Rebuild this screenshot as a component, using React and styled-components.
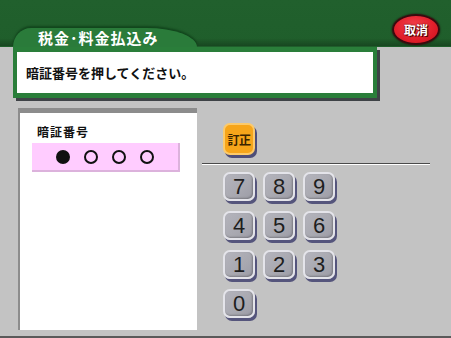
import React from "react";
import styled, { createGlobalStyle } from "styled-components";

const Global = createGlobalStyle`
  html, body { margin: 0; padding: 0; background: #c2c2c2; }
  body { font-family: "Noto Sans CJK JP", "Noto Sans", sans-serif; }
`;

const Screen = styled.div`
  width: 451px;
  height: 338px;
  box-sizing: border-box;
  background: #c3c3c3;
  border-bottom: 2px solid #5a5a5a;
  display: flex;
  flex-direction: column;
  overflow: hidden;
`;

const Header = styled.header`
  height: 101px;
  display: flex;
  align-items: flex-start;
  padding-left: 13px;
  background:
    linear-gradient(to bottom, rgba(0,0,0,0) 0, rgba(0,0,0,0) 38px, rgba(0,0,0,0.25) 46px, transparent 46px),
    linear-gradient(to bottom, #21602d 0, #1f5e2b 47px, #c3c3c3 47px);
`;

const LeftCol = styled.div`
  padding-top: 28px;
  display: flex;
  flex-direction: column;
`;

const Tab = styled.div`
  width: 184px;
  height: 19px;
  background: #2a7b3a;
  border-radius: 18px 50px 0 0 / 19px 19px 0 0;
  box-shadow: 0 -2px 2px rgba(0, 40, 10, 0.45);
  color: #fff;
  font-size: 15px;
  font-weight: 700;
  line-height: 20px;
  padding-left: 25px;
  box-sizing: border-box;
  letter-spacing: 1px;
`;

const MessageBox = styled.div`
  width: 364px;
  height: 51px;
  box-sizing: border-box;
  background: #fff;
  border: 4px solid #2a7e3a;
  border-top-width: 5px;
  border-bottom-width: 5px;
  box-shadow: 3px 3px 0 #3e4246;
  display: flex;
  align-items: center;
  padding-left: 9px;
  font-size: 13px;
  font-weight: 700;
  color: #111;
`;

const CancelButton = styled.div`
  margin-left: 15px;
  margin-top: 14px;
  width: 48px;
  height: 31px;
  box-sizing: border-box;
  border-radius: 50%;
  background: radial-gradient(ellipse at 45% 35%, #f3404a 0%, #e2202c 55%, #c8101c 100%);
  border: 2px solid #3a0a0e;
  box-shadow: 0 0 2px #1a0a0a;
  display: flex;
  align-items: center;
  justify-content: center;
  color: #fff;
  font-size: 12px;
  font-weight: 700;
  text-shadow: 0 0 2px #400, 1px 1px 0 #500;
`;

const Main = styled.main`
  display: flex;
  margin-top: 7px;
`;

const InputPanel = styled.section`
  margin-left: 18px;
  width: 179px;
  height: 222px;
  box-sizing: border-box;
  background: #fff;
  border-top: 5px solid #8c8c8c;
  border-left: 2px solid #8c8c8c;
  padding: 11px 0 0 12px;
`;

const Label = styled.div`
  font-size: 12px;
  font-weight: 700;
  line-height: 16px;
  color: #111;
  padding-left: 5px;
  letter-spacing: 1px;
`;

const PinBox = styled.div`
  margin-top: 3px;
  width: 148px;
  height: 29px;
  box-sizing: border-box;
  background: #ffccff;
  border-right: 2px solid #dcb2dc;
  border-bottom: 2px solid #dcb2dc;
  display: flex;
  align-items: center;
  padding-left: 24px;
  gap: 14px;
`;

const Dot = styled.span`
  width: 14px;
  height: 14px;
  box-sizing: border-box;
  border-radius: 50%;
  border: 2.5px solid #111;
  background: ${(p) => (p.$filled ? "#111" : "transparent")};
`;

const KeyArea = styled.section`
  margin-left: 5px;
  width: 228px;
  display: flex;
  flex-direction: column;
`;

const CorrectButton = styled.div`
  margin: 15px 0 0 21px;
  width: 32px;
  height: 32px;
  box-sizing: border-box;
  border-radius: 7px;
  background: #f6a51a;
  border: 2px solid #fcca6a;
  box-shadow: 2px 3px 0 #4e4e78;
  display: flex;
  align-items: center;
  justify-content: center;
  font-size: 12px;
  font-weight: 700;
  color: #3a2400;
  letter-spacing: -0.5px;
`;

const Divider = styled.hr`
  margin: 8px 0 0;
  width: 228px;
  height: 0;
  border: 0;
  border-top: 1px solid #4a4a4a;
  border-bottom: 1px solid #ffffff;
`;

const KeyGrid = styled.div`
  margin: 7px 0 0 21px;
  display: grid;
  grid-template-columns: repeat(3, 34px);
  grid-auto-rows: 31px;
  column-gap: 6px;
  row-gap: 8px;
`;

const Key = styled.div`
  width: 32px;
  height: 29px;
  box-sizing: border-box;
  border-radius: 7px;
  background: linear-gradient(135deg, #b4b4bc 0%, #a8a8b0 60%, #9c9ca6 100%);
  border: 2px solid #e4e4ea;
  box-shadow: 2px 3px 0 #55557c, inset -1px -1px 2px rgba(0,0,0,0.25);
  display: flex;
  align-items: center;
  justify-content: center;
  font-family: "Liberation Sans", Arial, sans-serif;
  font-size: 22px;
  color: #1e1e1e;
  line-height: 1;
`;

const keys = ["7", "8", "9", "4", "5", "6", "1", "2", "3", "0"];

export default function App() {
  return (
    <Screen>
      <Global />
      <Header>
        <LeftCol>
          <Tab>税金･料金払込み</Tab>
          <MessageBox>暗証番号を押してください。</MessageBox>
        </LeftCol>
        <CancelButton>取消</CancelButton>
      </Header>
      <Main>
        <InputPanel>
          <Label>暗証番号</Label>
          <PinBox>
            <Dot $filled />
            <Dot />
            <Dot />
            <Dot />
          </PinBox>
        </InputPanel>
        <KeyArea>
          <CorrectButton>訂正</CorrectButton>
          <Divider />
          <KeyGrid>
            {keys.map((k) => (
              <Key key={k}>{k}</Key>
            ))}
          </KeyGrid>
        </KeyArea>
      </Main>
    </Screen>
  );
}
